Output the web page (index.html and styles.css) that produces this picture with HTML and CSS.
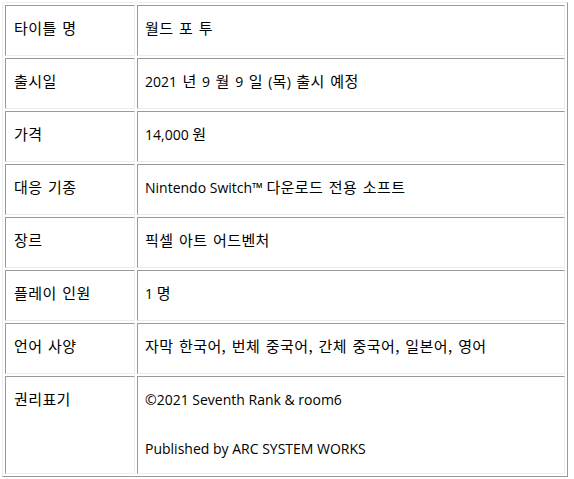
FILE: index.html
```html
<!DOCTYPE html>
<html lang="ko">
<head>
<meta charset="utf-8">
<title>월드 포 투</title>
<link rel="stylesheet" href="styles.css">
</head>
<body>
<div class="wrap">
<table class="spec">
<tbody>
<tr><td class="label"><div class="line"><span class="ko">타이틀 명</span></div></td><td class="value"><div class="line"><span class="ko">월드 포 투</span></div></td></tr>
<tr><td class="label"><div class="line"><span class="ko">출시일</span></div></td><td class="value"><div class="line wide">2021 <span class="ko">년</span> 9 <span class="ko">월</span> 9 <span class="ko">일</span> (<span class="ko">목</span>) <span class="ko">출시 예정</span></div></td></tr>
<tr><td class="label"><div class="line"><span class="ko">가격</span></div></td><td class="value"><div class="line">14,000 <span class="ko">원</span></div></td></tr>
<tr><td class="label"><div class="line"><span class="ko">대응 기종</span></div></td><td class="value"><div class="line">Nintendo Switch™ <span class="ko">다운로드 전용 소프트</span></div></td></tr>
<tr><td class="label"><div class="line"><span class="ko">장르</span></div></td><td class="value"><div class="line"><span class="ko">픽셀 아트 어드벤처</span></div></td></tr>
<tr><td class="label"><div class="line"><span class="ko">플레이 인원</span></div></td><td class="value"><div class="line">1 <span class="ko">명</span></div></td></tr>
<tr><td class="label"><div class="line"><span class="ko">언어 사양</span></div></td><td class="value"><div class="line"><span class="ko">자막 한국어, 번체 중국어, 간체 중국어, 일본어, 영어</span></div></td></tr>
<tr><td class="label"><div class="line"><span class="ko">권리표기</span></div></td><td class="value"><div class="line">©2021 Seventh Rank &amp; room6</div><div class="line last">Published by ARC SYSTEM WORKS</div></td></tr>
</tbody>
</table>
</div>
</body>
</html>
```

FILE: styles.css
```css
html, body {
  margin: 0;
  padding: 0;
  background: #ffffff;
}
body {
  font-family: "Open Sans", "Noto Sans CJK KR", sans-serif;
  font-size: 14px;
  color: #000000;
}
.wrap {
  padding: 2px 0 0 2px;
}
.spec {
  width: 566px;
  border-collapse: separate;
  border-spacing: 2px;
  border-style: solid;
  border-width: 1px;
  border-color: #ececec #999999 #999999 #ececec;
}
.spec td {
  vertical-align: top;
  padding: 0 8px;
  border-style: solid;
  border-width: 1px;
  border-color: #999999 #ececec #ececec #999999;
}
.spec td.label {
  width: 112px;
}
.spec td.value {
  padding-left: 7px;
}
.line {
  height: 19px;
  line-height: 19px;
  padding: 13px 0 17px;
}
.line.last {
  padding: 13px 0 15px;
}
.line.wide {
  word-spacing: 1.8px;
}
.ko {
  font-family: "Noto Sans CJK KR", sans-serif;
  font-size: 15px;
  line-height: 15px;
  letter-spacing: 0.4px;
  word-spacing: 1px;
}
```
